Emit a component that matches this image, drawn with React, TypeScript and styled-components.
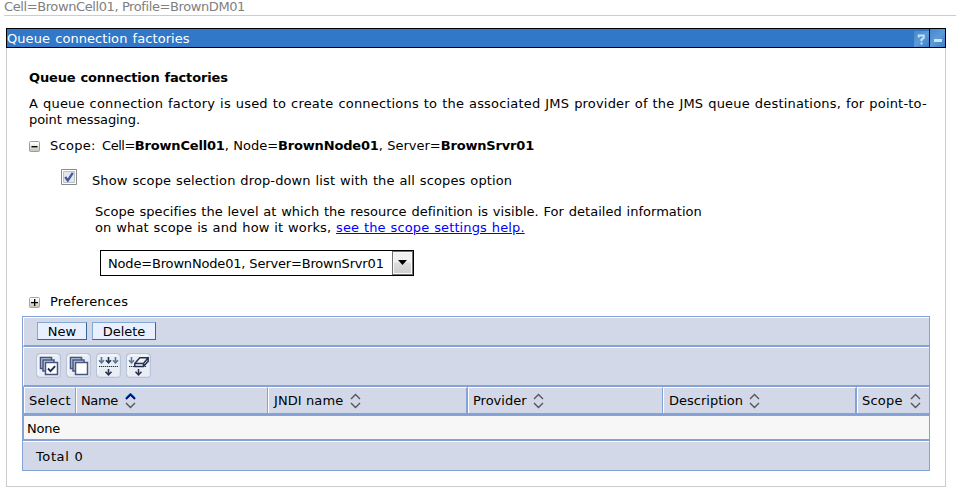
import React from 'react';
import styled, { createGlobalStyle } from 'styled-components';

const Global = createGlobalStyle`
  * { box-sizing: border-box; }
  body {
    margin: 0;
    background: #fff;
    color: #000;
    font: 13px/16px Verdana, "DejaVu Sans", sans-serif;
    overflow: hidden;
  }
  svg { display: block; flex: none; }
`;

const T = styled.span<{ $ls?: number; $ws?: number }>`
  letter-spacing: ${p => p.$ls ?? 0}px;
  word-spacing: ${p => p.$ws ?? 0}px;
  white-space: nowrap;

  b { letter-spacing: -0.18px; }
`;

const Context = styled.header`
  height: 16px;
  margin-left: 4px;
  border-bottom: 1px solid #ccc;
  color: #808080;
  line-height: 14px;
`;

const Portlet = styled.section`
  width: 940px;
  height: 459px;
  margin: 12px 0 0 6px;
  border: 1px solid #ccc;
  border-top: 0;
`;

const TitleBar = styled.div`
  display: flex;
  height: 20px;
  margin: 0 -1px;
  border: 1px solid #000;
  background: #3178c8;
  color: #fff;
  line-height: 19px;
`;

const TitleText = styled.div`
  flex: 1;
`;

const TitleButton = styled.button<{ $divided?: boolean }>`
  width: ${p => (p.$divided ? 16 : 15)}px;
  height: ${p => (p.$divided ? 18 : 16)}px;
  margin: ${p => (p.$divided ? 0 : '2px 0 0')};
  padding: 0;
  border: 0;
  border-left: ${p => (p.$divided ? '1px solid #000' : '0')};
  background: linear-gradient(135deg, #4687cc, #5c9bd8 50%, #3c7dc4);
`;

const Body = styled.div`
  padding: 22px 15px 0;
`;

const Heading = styled.h1`
  margin: 0 0 10px 7px;
  font-size: 13px;
  line-height: 16px;
`;

const Paragraph = styled.p`
  margin: 0 0 10px 7px;
`;

const ToggleRow = styled.div`
  display: flex;
  align-items: center;
  gap: 10px;
  height: 16px;
  margin-left: 7px;
`;

const CheckRow = styled.label`
  display: flex;
  align-items: flex-start;
  margin: 15px 0 0 39px;
  height: 20px;
  gap: 15px;

  ${T} { margin-top: 4px; }
`;

const ScopeHelp = styled.p`
  margin: 15px 0 0 73px;
`;

const Link = styled.a`
  color: #00f;
  text-decoration: underline;
`;

const Select = styled.div`
  display: flex;
  width: 314px;
  height: 26px;
  margin: 14px 0 18px 78px;
  border: 1px solid #000;
`;

const SelectValue = styled.div`
  flex: 1;
  padding-left: 7px;
  line-height: 25px;
`;

const SelectArrow = styled.div`
  width: 21px;
  border: 1px solid #707070;
  box-shadow: inset 0 0 0 1px #f8f8f8;
  background: linear-gradient(#f1f1f1 45%, #ddd 50%, #cecece);
`;

const Table = styled.div`
  width: 908px;
  margin-top: 6px;
  border: 1px solid #84a2d6;
  background: #d2d8e7;
`;

const Band = styled.div<{ $h: number }>`
  display: flex;
  align-items: center;
  height: ${p => p.$h}px;
  border-top: 1px solid #fff;
  border-left: 1px solid #fff;
  border-bottom: 2px solid #84a2d6;
`;

const ButtonBand = styled(Band)`
  gap: 5px;
  padding: 0 0 1px 13px;
`;

const IconBand = styled(Band)`
  gap: 5px;
  padding: 0 0 2px 12px;
`;

const Button = styled.button<{ $w: number }>`
  width: ${p => p.$w}px;
  height: 18px;
  padding: 1px 0 0;
  border: 1px solid;
  border-color: #84a9d4 #336699 #336699 #84a9d4;
  background: #e8f0ff;
  font: inherit;
  line-height: 16px;
`;

const HeaderRow = styled.div`
  display: grid;
  grid-template-columns: 53px 192px 200px 195px 194px 72px;
  height: 29px;
  border-bottom: 3px solid #84a2d6;
`;

const Cell = styled.div<{ $edge?: number; $pad?: number; $gap?: number }>`
  display: flex;
  align-items: center;
  gap: ${p => p.$gap ?? 7}px;
  padding-left: ${p => p.$pad ?? 4}px;
  border-left: 1px solid #fff;
  border-top: 1px solid #fff;
  border-right: ${p => p.$edge ?? 1}px solid #84a2d6;
  white-space: nowrap;
`;

const SelectCell = styled(Cell)`
  box-shadow: -1px 0 #84a2d6;
  margin-left: 1px;
`;

const EmptyRow = styled.div`
  height: 25px;
  padding-left: 3px;
  border-left: 1px solid #84a2d6;
  border-bottom: 2px solid #84a2d6;
  background: #f7f7f7;
  line-height: 25px;
`;

const TotalRow = styled.div`
  height: 29px;
  padding-left: 13px;
  border-top: 1px solid #fff;
  line-height: 30px;
`;

const HelpIcon = () => (
  <svg width="15" height="15" viewBox="0 0 15 15" fill="none" stroke="#c9e2f7" strokeWidth="2">
    <path d="M4.7 5.5V3.5H9.7V6L7.5 7.5V9.2M7.5 10.5V12.5" />
  </svg>
);

const MinimizeIcon = () => (
  <svg width="15" height="18" viewBox="0 0 15 18">
    <path d="M4 10h8v3H4z" fill="#c9e2f7" />
  </svg>
);

const Toggle = ({ open }: { open?: boolean }) => (
  <svg width="11" height="11" viewBox="0 0 11 11">
    <defs>
      <linearGradient id="toggleFace" x1="0" y1="0" x2="0" y2="1">
        <stop offset="0.2" stopColor="#fbfbf8" />
        <stop offset="1" stopColor="#c4bfb4" />
      </linearGradient>
    </defs>
    <rect x=".5" y=".5" width="10" height="10" rx="1" fill="url(#toggleFace)" stroke={open ? '#7fa3c2' : '#a3a6a6'} />
    <path d={open ? 'M2.5 5h6v1.4h-6z' : 'M2 5h7v1.3H2zM5 2h1.3v7H5z'} fill="#000" />
  </svg>
);

const CheckBox = () => (
  <svg width="16" height="16" viewBox="0 0 16 16">
    <path d="M.5.5h15v15H.5z" fill="#fff" stroke="#8a8b8b" />
    <path d="M2.5 2.5h11v11h-11z" fill="#e4e6ea" stroke="#bcc1c8" />
    <path d="M4.2 8 6.8 11.5 11.8 3.8" fill="none" stroke="#4258a0" strokeWidth="2.3" />
  </svg>
);

const DropArrow = () => (
  <svg width="19" height="22" viewBox="0 0 19 22">
    <path d="M5 8h9L9.5 13z" fill="#000" />
  </svg>
);

const Sort = ({ active }: { active?: boolean }) => (
  <svg width="11" height="16" viewBox="0 0 11 16" fill="none">
    {active && <path d="M1 5.2 5.5 .7 10 5.2" stroke="#30c0d0" strokeWidth="2" />}
    <path d="M1 6 5.5 1.5 10 6" stroke={active ? '#000080' : '#555'} strokeWidth={active ? 1.8 : 1.4} />
    <path d="M1 10 5.5 14.5 10 10" stroke="#555" strokeWidth="1.4" />
  </svg>
);

type ToolKind = 'selectAll' | 'deselectAll' | 'filter' | 'clear';

const ToolIcon = ({ kind }: { kind: ToolKind }) => {
  const stack = kind === 'selectAll' || kind === 'deselectAll';
  return (
    <svg width="25" height="25" viewBox="0 0 25 25" fill="none">
      <rect x=".6" y=".6" width="23.8" height="23.8" rx="3.5" fill="#e9edf5" stroke="#b9c4d8" strokeWidth="1.2" />
      <path d="M3.5 2h18M2 3.5v18" stroke="#fff" />
      {stack && (
        <g stroke="#465680" strokeWidth="1.5">
          <path d="M4.5 4.5h11v11h-11z" fill="#c3cde1" />
          <path d="M7 7h11v11H7z" fill="#c3cde1" />
          <path d="M9.5 9.5h12v12h-12z" fill="#fff" />
        </g>
      )}
      {kind === 'selectAll' && <path d="m12 15.5 2.5 2.6 4.6-5" stroke="#202c50" strokeWidth="1.9" />}
      {kind === 'filter' && (
        <g strokeWidth="1.6">
          <path d="M5.5 4v6M3 7.2 5.5 9.8 8 7.2M19.5 4v6M17 7.2l2.5 2.6L22 7.2" stroke="#587898" />
          <path d="M12.5 4v6M10 7.2l2.5 2.6L15 7.2M12.5 16v6M9.5 18.7l3 3.1 3-3.1" stroke="#263350" />
          <path d="M3 13.5h19" stroke="#263350" strokeWidth="1.2" strokeDasharray="1.3 .7" />
        </g>
      )}
      {kind === 'clear' && (
        <g strokeWidth="1.5">
          <path d="M5.5 4v6M3 7.2 5.5 9.8 8 7.2" stroke="#587898" />
          <path d="M3 13.5h17" stroke="#263350" strokeWidth="1.2" strokeDasharray="1.3 .7" />
          <path d="M12.5 16v6M9.5 18.7l3 3.1 3-3.1" stroke="#263350" />
          <path d="m8.8 10.5 5-5.7h8.4v3.5l-4.7 5.2H8.8zM8.8 10.5h8.7l4.7-5.7M17.5 10.5v3" fill="#f8f9fd" stroke="#263350" />
        </g>
      )}
    </svg>
  );
};

export default function App() {
  return (
    <>
      <Global />
      <Context><T $ls={-0.4}>Cell=BrownCell01, Profile=BrownDM01</T></Context>
      <Portlet>
        <TitleBar>
          <TitleText><T $ls={0.06} $ws={1}>Queue connection factories</T></TitleText>
          <TitleButton aria-label="Help"><HelpIcon /></TitleButton>
          <TitleButton $divided aria-label="Minimize"><MinimizeIcon /></TitleButton>
        </TitleBar>
        <Body>
          <Heading><T $ls={-0.14} $ws={0.5}>Queue connection factories</T></Heading>
          <Paragraph>
            <T $ls={0.19} $ws={0.6}>A queue connection factory is used to create connections to the associated JMS provider of the JMS queue destinations, for point-to-</T>
            <br />
            <T $ls={-0.1} $ws={0.6}>point messaging.</T>
          </Paragraph>
          <ToggleRow>
            <Toggle open />
            <span>
              <T $ls={0.28} $ws={2}>Scope: </T>
              <T $ls={-0.5}>Cell=</T>
              <T $ws={0.3}><b>BrownCell01</b>, Node=<b>BrownNode01</b>, Server=<b>BrownSrvr01</b></T>
            </span>
          </ToggleRow>
          <CheckRow>
            <CheckBox />
            <T $ls={0.12} $ws={0.6}>Show scope selection drop-down list with the all scopes option</T>
          </CheckRow>
          <ScopeHelp>
            <T $ls={0.03} $ws={0.6}>Scope specifies the level at which the resource definition is visible. For detailed information</T>
            <br />
            <T $ls={0.12} $ws={0.6}>on what scope is and how it works, <Link>see the scope settings help.</Link></T>
          </ScopeHelp>
          <Select>
            <SelectValue><T $ls={-0.17}>Node=BrownNode01, Server=BrownSrvr01</T></SelectValue>
            <SelectArrow><DropArrow /></SelectArrow>
          </Select>
          <ToggleRow>
            <Toggle />
            <T $ls={0.15}>Preferences</T>
          </ToggleRow>
          <Table>
            <ButtonBand $h={30}>
              <Button $w={50}><T>New</T></Button>
              <Button $w={64}><T>Delete</T></Button>
            </ButtonBand>
            <IconBand $h={40}>
              <ToolIcon kind="selectAll" />
              <ToolIcon kind="deselectAll" />
              <ToolIcon kind="filter" />
              <ToolIcon kind="clear" />
            </IconBand>
            <HeaderRow>
              <SelectCell><T $ls={0.3}>Select</T></SelectCell>
              <Cell><T $ls={-0.4}>Name</T><Sort active /></Cell>
              <Cell $edge={2} $pad={5}><T $ls={0.1}>JNDI name</T><Sort /></Cell>
              <Cell $gap={6}><T>Provider</T><Sort /></Cell>
              <Cell $edge={2} $pad={5} $gap={6}><T>Description</T><Sort /></Cell>
              <Cell $edge={0}><T $ls={0.2}>Scope</T><Sort /></Cell>
            </HeaderRow>
            <EmptyRow><T $ls={-0.2}>None</T></EmptyRow>
            <TotalRow><T $ls={0.6} $ws={0.3}>Total 0</T></TotalRow>
          </Table>
        </Body>
      </Portlet>
    </>
  );
}
